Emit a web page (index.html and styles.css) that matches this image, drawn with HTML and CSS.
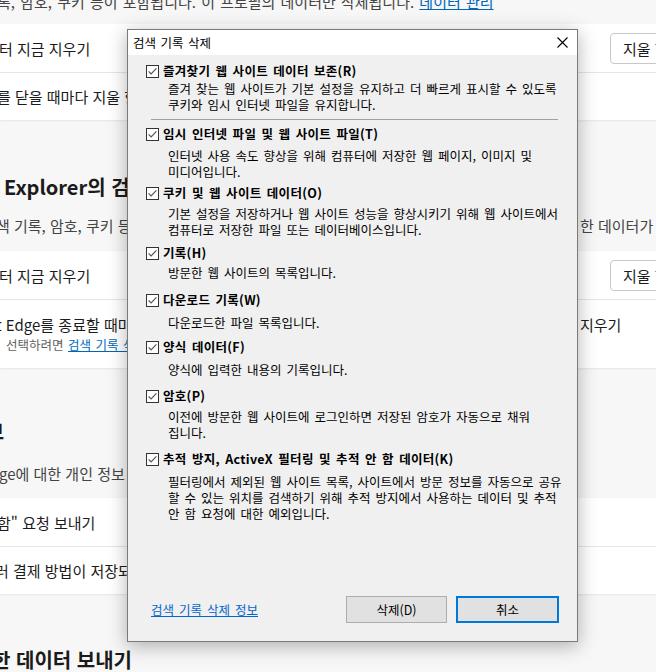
FILE: index.html
```html
<!DOCTYPE html>
<html lang="ko">
<head>
<meta charset="utf-8">
<title>검색 기록 삭제</title>
<link rel="stylesheet" href="styles.css">
</head>
<body>
<div class="page">
  <p class="intro">록, 암호, 쿠키 등이 포함됩니다. 이 프로필의 데이터만 삭제됩니다. <a class="link" href="#">데이터 관리</a></p>

  <section class="card card-first">
    <div class="row">
      <span class="row-title off-1">터 지금 지우기</span>
      <span class="btn-choose">지울 항목 선택</span>
    </div>
    <div class="row">
      <span class="row-title off-3">를 닫을 때마다 지울 항목 선택</span>
    </div>
  </section>

  <h2 class="heading heading-ie">Explorer의 검색 데이터 지우기</h2>
  <div class="desc desc-split"><span class="cut">색 기록, 암호, 쿠키 등이 포함됩니다. 선택</span><span>한 데이터가 삭제됩니다.</span></div>

  <section class="card card-ie">
    <div class="row">
      <span class="row-title off-1">터 지금 지우기</span>
      <span class="btn-choose">지울 항목 선택</span>
    </div>
    <div class="row row-tall">
      <div class="tall-line"><span class="cut">t Edge를 종료할 때마다 Internet Explorer 및 Internet Explorer 모드의 검색 데이터</span><span>지우기</span></div>
      <div class="sub-line">선택하려면 <a class="link" href="#">검색 기록 삭제 메뉴로 이동하세요.</a></div>
    </div>
  </section>

  <h2 class="heading heading-privacy">개인 정보</h2>
  <p class="desc desc-privacy">ge에 대한 개인 정보 설정을 선택합니다.</p>

  <section class="card card-privacy">
    <div class="row">
      <span class="row-title off-3">함" 요청 보내기</span>
    </div>
    <div class="row">
      <span class="row-title off-5">러 결제 방법이 저장되어 있는지 확인하도록 허용</span>
    </div>
  </section>

  <h2 class="heading heading-last">한 데이터 보내기</h2>
</div>

<div class="dialog" role="dialog" aria-label="검색 기록 삭제">
  <div class="titlebar">
    <span class="title">검색 기록 삭제</span>
    <span class="close" aria-label="닫기"><svg width="11" height="11" viewBox="0 0 11 11"><path d="M0.5 0.5L10.5 10.5M10.5 0.5L0.5 10.5" stroke="#000" stroke-width="1.1" fill="none"/></svg></span>
  </div>
  <div class="dlg-body">
    <div class="opt opt-1">
      <div class="opt-label"><span class="cb"><svg width="13" height="13" viewBox="0 0 13 13"><rect x="0.5" y="0.5" width="12" height="12" fill="#fff" stroke="#333"/><path d="M2.6 6.4L5.1 9L10.4 3.4" stroke="#555" stroke-width="1.2" fill="none"/></svg></span><span>즐겨찾기 웹 사이트 데이터 보존(R)</span></div>
      <p class="opt-desc">즐겨 찾는 웹 사이트가 기본 설정을 유지하고 더 빠르게 표시할 수 있도록<br>쿠키와 임시 인터넷 파일을 유지합니다.</p>
    </div>
    <div class="sep"></div>
    <div class="opt opt-2">
      <div class="opt-label"><span class="cb"><svg width="13" height="13" viewBox="0 0 13 13"><rect x="0.5" y="0.5" width="12" height="12" fill="#fff" stroke="#333"/><path d="M2.6 6.4L5.1 9L10.4 3.4" stroke="#555" stroke-width="1.2" fill="none"/></svg></span><span>임시 인터넷 파일 및 웹 사이트 파일(T)</span></div>
      <p class="opt-desc">인터넷 사용 속도 향상을 위해 컴퓨터에 저장한 웹 페이지, 이미지 및<br>미디어입니다.</p>
    </div>
    <div class="opt opt-3">
      <div class="opt-label"><span class="cb"><svg width="13" height="13" viewBox="0 0 13 13"><rect x="0.5" y="0.5" width="12" height="12" fill="#fff" stroke="#333"/><path d="M2.6 6.4L5.1 9L10.4 3.4" stroke="#555" stroke-width="1.2" fill="none"/></svg></span><span>쿠키 및 웹 사이트 데이터(O)</span></div>
      <p class="opt-desc">기본 설정을 저장하거나 웹 사이트 성능을 향상시키기 위해 웹 사이트에서<br>컴퓨터로 저장한 파일 또는 데이터베이스입니다.</p>
    </div>
    <div class="opt opt-4">
      <div class="opt-label"><span class="cb"><svg width="13" height="13" viewBox="0 0 13 13"><rect x="0.5" y="0.5" width="12" height="12" fill="#fff" stroke="#333"/><path d="M2.6 6.4L5.1 9L10.4 3.4" stroke="#555" stroke-width="1.2" fill="none"/></svg></span><span>기록(H)</span></div>
      <p class="opt-desc">방문한 웹 사이트의 목록입니다.</p>
    </div>
    <div class="opt opt-5">
      <div class="opt-label"><span class="cb"><svg width="13" height="13" viewBox="0 0 13 13"><rect x="0.5" y="0.5" width="12" height="12" fill="#fff" stroke="#333"/><path d="M2.6 6.4L5.1 9L10.4 3.4" stroke="#555" stroke-width="1.2" fill="none"/></svg></span><span>다운로드 기록(W)</span></div>
      <p class="opt-desc">다운로드한 파일 목록입니다.</p>
    </div>
    <div class="opt opt-6">
      <div class="opt-label"><span class="cb"><svg width="13" height="13" viewBox="0 0 13 13"><rect x="0.5" y="0.5" width="12" height="12" fill="#fff" stroke="#333"/><path d="M2.6 6.4L5.1 9L10.4 3.4" stroke="#555" stroke-width="1.2" fill="none"/></svg></span><span>양식 데이터(F)</span></div>
      <p class="opt-desc">양식에 입력한 내용의 기록입니다.</p>
    </div>
    <div class="opt opt-7">
      <div class="opt-label"><span class="cb"><svg width="13" height="13" viewBox="0 0 13 13"><rect x="0.5" y="0.5" width="12" height="12" fill="#fff" stroke="#333"/><path d="M2.6 6.4L5.1 9L10.4 3.4" stroke="#555" stroke-width="1.2" fill="none"/></svg></span><span>암호(P)</span></div>
      <p class="opt-desc">이전에 방문한 웹 사이트에 로그인하면 저장된 암호가 자동으로 채워<br>집니다.</p>
    </div>
    <div class="opt opt-8">
      <div class="opt-label"><span class="cb"><svg width="13" height="13" viewBox="0 0 13 13"><rect x="0.5" y="0.5" width="12" height="12" fill="#fff" stroke="#333"/><path d="M2.6 6.4L5.1 9L10.4 3.4" stroke="#555" stroke-width="1.2" fill="none"/></svg></span><span>추적 방지, ActiveX 필터링 및 추적 안 함 데이터(K)</span></div>
      <p class="opt-desc">필터링에서 제외된 웹 사이트 목록, 사이트에서 방문 정보를 자동으로 공유<br>할 수 있는 위치를 검색하기 위해 추적 방지에서 사용하는 데이터 및 추적<br>안 함 요청에 대한 예외입니다.</p>
    </div>

    <div class="dlg-footer">
      <a class="dlg-link" href="#">검색 기록 삭제 정보</a>
      <div class="buttons">
        <button class="btn" type="button">삭제(D)</button>
        <button class="btn btn-default" type="button">취소</button>
      </div>
    </div>
  </div>
</div>
</body>
</html>
```

FILE: styles.css
```css
html, body {
  margin: 0;
  padding: 0;
  overflow: hidden;
}

body {
  width: 656px;
  height: 672px;
  position: relative;
  background: #f7f7f7;
  font-family: "Noto Sans CJK KR", "Noto Sans", sans-serif;
  color: #1b1b1b;
}

.page {
  width: 820px;
}

.link {
  color: #0067b8;
  text-decoration: underline;
}

.intro {
  margin: -8px 0 0 -3px;
  font-size: 15px;
  line-height: 20px;
  color: #444;
  white-space: nowrap;
  word-spacing: 1px;
}

.card {
  background: #fff;
  box-shadow: 0 1px 2px rgba(0, 0, 0, 0.07);
}

.card-first { margin-top: 12px; }
.card-ie { margin-top: 15px; }
.card-privacy { margin-top: 14px; }

.row {
  display: grid;
  grid-template-columns: 610px auto;
  align-items: center;
  height: 48px;
  font-size: 15px;
  white-space: nowrap;
}

.row + .row {
  border-top: 1px solid #e6e6e6;
  height: 47px;
}

.row-title { color: #1b1b1b; }
.off-1 { margin-left: -1px; }
.off-3 { margin-left: -3px; }
.off-5 { margin-left: -5px; }

.btn-choose {
  justify-self: start;
  box-sizing: border-box;
  height: 31px;
  padding: 0 12px;
  border: 1px solid #c8c8c8;
  border-radius: 4px;
  background: #fff;
  line-height: 29px;
  font-size: 15px;
}

.row.row-tall {
  display: block;
  height: auto;
  padding: 15px 0 13px;
}

.tall-line {
  display: grid;
  grid-template-columns: 584px auto;
  margin-left: -4px;
  line-height: 20px;
}

.cut {
  overflow: hidden;
}

.sub-line {
  margin-left: 6px;
  font-size: 12.5px;
  line-height: 20px;
  color: #616161;
  word-spacing: 1px;
}

.heading {
  margin: 0;
  font-size: 20px;
  line-height: 28px;
  font-weight: 700;
  white-space: nowrap;
  color: #1b1b1b;
}

.heading-ie { margin: 53px 0 0 4px; }
.heading-privacy { margin: 50px 0 0 -75px; }
.heading-last { margin: 52px 0 0 -8px; }

.desc {
  margin: 0;
  font-size: 15px;
  line-height: 20px;
  color: #444;
  white-space: nowrap;
}

.desc-split {
  display: grid;
  grid-template-columns: 584px auto;
  margin: 15px 0 0 -4px;
}

.desc-privacy { margin: 18px 0 0 -1px; }

/* dialog */
.dialog {
  position: absolute;
  left: 127px;
  top: 29px;
  width: 451px;
  height: 613px;
  box-sizing: border-box;
  border: 1px solid #7a7a7a;
  background: #f0f0f0;
  box-shadow: 0 4px 18px rgba(0, 0, 0, 0.3);
  display: flex;
  flex-direction: column;
  font-size: 12.5px;
  color: #000;
}

.titlebar {
  height: 25px;
  background: #fff;
  display: flex;
  align-items: center;
  justify-content: space-between;
  padding: 0 9px 0 5px;
  flex: none;
}

.title {
  font-size: 12.5px;
  line-height: 16px;
  word-spacing: 1px;
}

.close {
  display: flex;
  width: 11px;
  height: 11px;
}

.dlg-body {
  flex: 1;
  display: flex;
  flex-direction: column;
  padding: 8px 18px 18px 18px;
  white-space: nowrap;
  word-spacing: 1.5px;
}

.opt-label {
  display: flex;
  align-items: center;
  gap: 4px;
  height: 16px;
  line-height: 16px;
  font-weight: 700;
  letter-spacing: 0.3px;
}

.cb {
  display: flex;
  width: 13px;
  height: 13px;
}

.opt-desc {
  margin: 0 0 0 22px;
  line-height: 16px;
}

.opt-1 .opt-desc { margin-top: 2px; }

.sep {
  height: 1px;
  background: #a0a0a0;
  margin: 6px 0 0 5px;
  width: 407px;
}

.opt-2 { margin-top: 6px; }
.opt-2 .opt-desc { margin-top: 6px; }
.opt-3 { margin-top: 5px; }
.opt-3 .opt-desc { margin-top: 5px; }
.opt-4 { margin-top: 7px; }
.opt-4 .opt-desc { margin-top: 4px; }
.opt-5 { margin-top: 11px; }
.opt-5 .opt-desc { margin-top: 7px; }
.opt-6 { margin-top: 8px; }
.opt-6 .opt-desc { margin-top: 7px; }
.opt-7 { margin-top: 10px; }
.opt-7 .opt-desc { margin-top: 5px; }
.opt-8 { margin-top: 10px; }
.opt-8 .opt-desc { margin-top: 7px; }

.dlg-footer {
  margin-top: auto;
  display: flex;
  align-items: center;
  justify-content: space-between;
}

.dlg-link {
  margin-left: 5px;
  color: #0066cc;
  text-decoration: underline;
  line-height: 16px;
}

.buttons {
  display: flex;
  gap: 9px;
}

.btn {
  box-sizing: border-box;
  width: 101px;
  height: 27px;
  margin: 0;
  padding: 0;
  border: 1px solid #adadad;
  background: #e1e1e1;
  font-family: "Noto Sans CJK KR", "Noto Sans", sans-serif;
  font-size: 12.5px;
  color: #000;
}

.btn-default {
  width: 103px;
  border: 2px solid #0078d7;
}
```
